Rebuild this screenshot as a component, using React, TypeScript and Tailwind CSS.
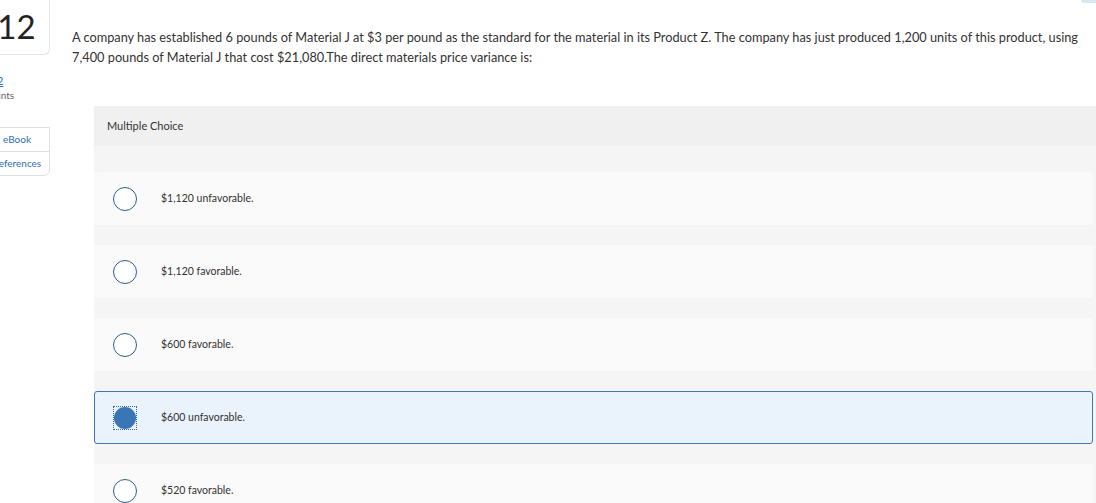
import { useState } from "react";

const options = [
  "$1,120 unfavorable.",
  "$1,120 favorable.",
  "$600 favorable.",
  "$600 unfavorable.",
  "$520 favorable.",
];

export default function App() {
  const [selected, setSelected] = useState(3);

  return (
    <div
      className="relative flex h-[503px] w-[1096px] overflow-hidden bg-white text-[#333]"
      style={{ fontFamily: "Lato, 'Open Sans', sans-serif" }}
    >
      {/* top right indicator */}
      <div className="absolute right-0 top-0 h-[3px] w-[15px] rounded-bl bg-[#dbe6f3]" />

      {/* Sidebar */}
      <div className="w-[50px] shrink-0">
        <div className="-ml-[16px] flex h-[55px] w-[66px] items-center justify-center rounded-br-md border-b border-r border-[#e5e5e5] pb-[2px]">
          <span className="text-[33px] leading-none text-[#222]">12</span>
        </div>
        <div className="-ml-[12px] mt-[19px] text-[11px] leading-[14px]">
          <div className="text-[#2f6fb3] underline">0.2</div>
          <div className="-ml-[1px] text-[10px] text-[#666]">points</div>
        </div>
        <div className="-ml-[16px] mt-[25px] w-[66px] rounded-br-md border border-[#e0e0e0] text-[10px]">
          <div className="flex h-[24px] items-center justify-center border-b border-[#e0e0e0] text-[#2f6fb3]">
            eBook
          </div>
          <div className="flex h-[23px] items-center justify-center text-[#2f6fb3]">
            References
          </div>
        </div>
      </div>

      {/* Main */}
      <div className="min-w-0 flex-1 pl-[22px] pt-[27px]">
        <p className="pr-[8px] text-[12.75px] leading-[20px] text-[#333]">
          A company has established 6 pounds of Material J at $3 per pound as the standard for the
          material in its Product Z. The company has just produced 1,200 units of this product, using
          7,400 pounds of Material J that cost $21,080.The direct materials price variance is:
        </p>

        <div className="ml-[22px] mt-[39px] bg-[#f5f5f5]">
          <div className="flex h-[40px] items-center bg-[#f0f0f0] pl-[13px] text-[11px] text-[#333]">
            Multiple Choice
          </div>
          <div className="flex flex-col gap-[20px] pr-[3px] pt-[26px]">
            {options.map((opt, i) => {
              const active = i === selected;
              return (
                <button
                  key={opt}
                  onClick={() => setSelected(i)}
                  className={
                    active
                      ? "flex h-[53px] items-center rounded-[3px] border border-[#3a78c2] bg-[#eaf2fc] text-left"
                      : "flex h-[53px] items-center rounded-[3px] border border-transparent bg-[#fafafa] text-left"
                  }
                >
                  <span className="ml-[18px] flex h-[24px] w-[24px] items-center justify-center">
                    {active ? (
                      <span className="flex h-[24px] w-[24px] items-center justify-center border border-dotted border-[#3a6aa0]">
                        <span className="h-[22px] w-[22px] rounded-full bg-[#3a75b8]" />
                      </span>
                    ) : (
                      <span className="h-[24px] w-[24px] rounded-full border-[1.5px] border-[#2e5e8f] bg-white" />
                    )}
                  </span>
                  <span className="ml-[24px] text-[10.5px] text-[#333]">{opt}</span>
                </button>
              );
            })}
          </div>
        </div>
      </div>
    </div>
  );
}
